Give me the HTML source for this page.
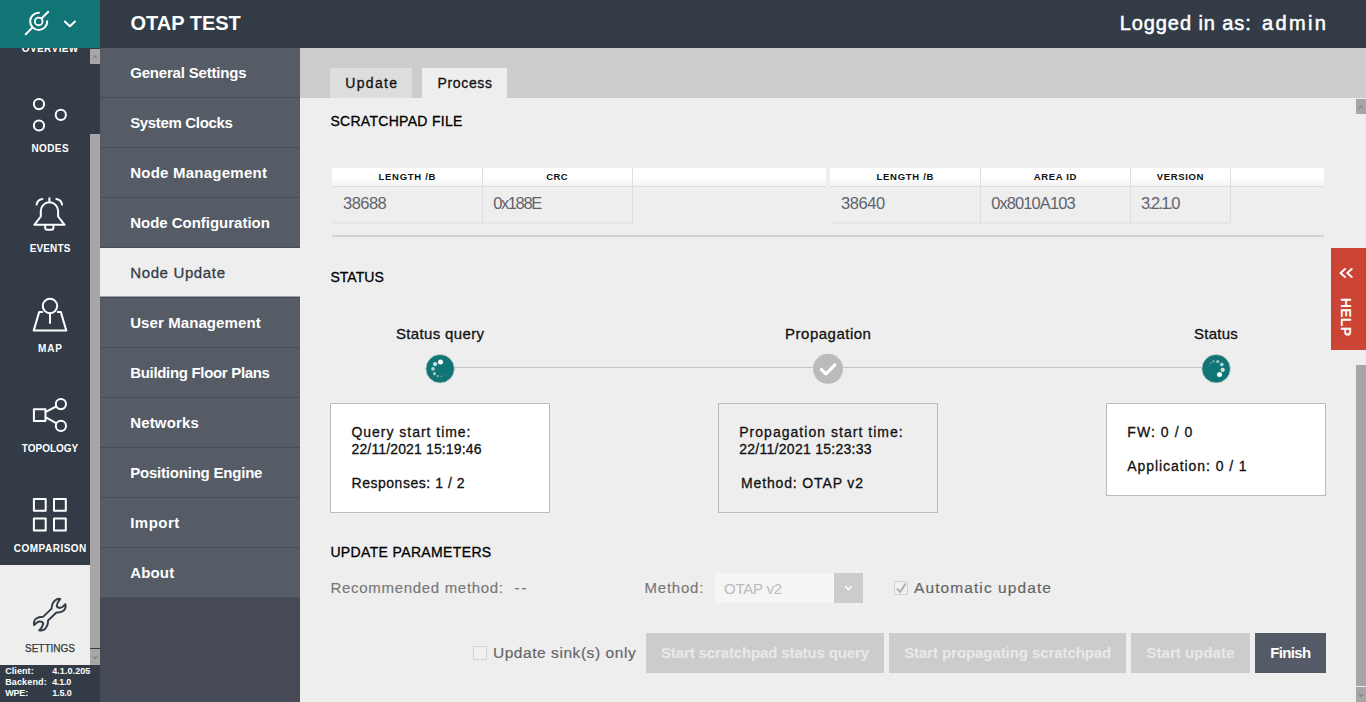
<!DOCTYPE html>
<html lang="en">
<head>
<meta charset="utf-8">
<title>OTAP TEST</title>
<style>
html,body{margin:0;padding:0}
body{width:1366px;height:702px;overflow:hidden;background:#eee;font-family:"Liberation Sans",sans-serif;position:relative}
.t{position:absolute;white-space:pre;line-height:normal}
.b{position:absolute}
svg{position:absolute;overflow:visible}
.ic{fill:none;stroke:#fff;stroke-width:2;stroke-linecap:round;stroke-linejoin:round}
.sb{background:#a6a6a6}
.mi{left:100px;width:200px;height:49px;background:#555c66;border-bottom:1px solid #464d58}
.btn{top:633px;height:40px;background:#ccc}
.th{top:168px;height:18px;background:linear-gradient(#fff 0,#fff 45%,#f3f3f3 100%);border-bottom:1px solid #ddd}
.vl{width:1px;background:#ddd;top:168px;height:55px}
.hl{height:2px;background:#e6e6e6;top:222px}
.box{top:403px;width:218px;border:1px solid #bbb}
.cb{width:12px;height:12px;border:1px solid #d2d2d2;background:#f1f1f1}
</style>
</head>
<body>
<nav>
<div class="b" style="left:0;top:48px;width:100px;height:654px;background:#333c46"></div>
<div class="b" style="left:0;top:565px;width:90px;height:100px;background:#eee"></div>
<span class="t" style="left:21.8px;top:42.8px;font-size:10px;font-weight:700;color:#fff;letter-spacing:0.40px;">OVERVIEW</span>
<span class="t" style="left:31.4px;top:142.8px;font-size:10px;font-weight:700;color:#fff;letter-spacing:0.41px;">NODES</span>
<span class="t" style="left:29.8px;top:242.8px;font-size:10px;font-weight:700;color:#fff;letter-spacing:0.10px;">EVENTS</span>
<span class="t" style="left:38.0px;top:342.8px;font-size:10px;font-weight:700;color:#fff;letter-spacing:0.83px;">MAP</span>
<span class="t" style="left:21.8px;top:442.8px;font-size:10px;font-weight:700;color:#fff;letter-spacing:-0.01px;">TOPOLOGY</span>
<span class="t" style="left:13.8px;top:542.8px;font-size:10px;font-weight:700;color:#fff;letter-spacing:0.48px;">COMPARISON</span>
<span class="t" style="left:25.0px;top:642.8px;font-size:10px;color:#333c46;-webkit-text-stroke:.25px #333c46;">SETTINGS</span>
<svg width="100" height="617" viewBox="0 48 100 617" style="left:0;top:48px">
<g class="ic">
<circle cx="39" cy="104.1" r="5.1"/><circle cx="60.8" cy="114.9" r="5.1"/><circle cx="39" cy="125.5" r="5.1"/>
<path d="M49.4 198.3V202.3M40.8 216.5V211A8.65 8.65 0 0 1 58.1 211V216.5L64.6 224.8H34.3L40.8 216.5ZM45.2 225V227.7Q45.2 229.7 47.2 229.7H51.4Q53.4 229.7 53.4 227.7V225M36.6 204.6A6.8 6.8 0 0 1 42.4 198.9M56.3 198.9A6.8 6.8 0 0 1 62.1 204.6"/>
<circle cx="50" cy="306" r="7.2"/><path d="M50 313.4V323M42.2 311.9H39.2L33.7 330.6H66.3L60.8 311.9H57.8"/>
<rect x="33.9" y="409.3" width="11.6" height="11.6"/><circle cx="60.9" cy="404.1" r="5.1"/><circle cx="60.9" cy="425.9" r="5.1"/><path d="M45.8 411.8L56.2 406.5M45.8 417.3L56.2 423.2"/>
<rect x="33.9" y="499" width="11.8" height="11.8"/><rect x="54" y="499" width="11.8" height="11.8"/><rect x="33.9" y="518.6" width="11.8" height="11.8"/><rect x="54" y="518.6" width="11.8" height="11.8"/>
</g>
<g transform="translate(25 592) scale(0.0641)"><path fill="none" stroke="#333b46" stroke-width="30" stroke-linejoin="round" stroke-linecap="round" d="M285 385L415 260C415 190 440 140 500 110C520 104 538 104 550 108C526 138 500 175 495 215C500 240 530 250 560 245C590 235 612 214 630 190C640 224 635 260 600 293C570 315 530 322 490 320L360 445C360 500 345 550 300 588C270 603 242 604 220 598C248 572 275 540 285 495C280 465 250 458 220 460C185 470 163 496 143 518C132 482 140 445 175 412C205 390 245 385 285 385Z"/></g>
</svg>
<div class="b sb" style="left:90px;top:49px;width:10px;height:15px"></div>
<div class="b sb" style="left:90px;top:134px;width:10px;height:514px"></div>
<div class="b sb" style="left:90px;top:649px;width:10px;height:16px"></div>
<svg width="10" height="617" viewBox="90 48 10 617" style="left:90px;top:48px"><path fill="none" stroke="#808080" stroke-width="1.1" d="M92.8 58.5L94.9 55.7L97 58.5M92.9 656L94.9 658.5L96.9 656"/></svg>
<span class="t" style="left:5.2px;top:665.9px;font-size:9px;font-weight:700;color:#fff;letter-spacing:0.08px;">Client:</span>
<span class="t" style="left:52.2px;top:665.9px;font-size:9px;font-weight:700;color:#fff;letter-spacing:0.08px;">4.1.0.205</span>
<span class="t" style="left:5.2px;top:676.8px;font-size:9px;font-weight:700;color:#fff;letter-spacing:0.14px;">Backend:</span>
<span class="t" style="left:52.2px;top:676.8px;font-size:9px;font-weight:700;color:#fff;letter-spacing:-0.26px;">4.1.0</span>
<span class="t" style="left:5.2px;top:687.7px;font-size:9px;font-weight:700;color:#fff;letter-spacing:-0.17px;">WPE:</span>
<span class="t" style="left:52.2px;top:687.7px;font-size:9px;font-weight:700;color:#fff;letter-spacing:-0.13px;">1.5.0</span>
</nav>
<nav>
<div class="b" style="left:100px;top:48px;width:200px;height:654px;background:#454a56"></div>
<div class="b mi" style="top:48px"></div><span class="t" style="left:130.2px;top:64.0px;font-size:15px;font-weight:700;color:#fff;letter-spacing:-0.19px;">General Settings</span>
<div class="b mi" style="top:98px"></div><span class="t" style="left:130.2px;top:114.0px;font-size:15px;font-weight:700;color:#fff;letter-spacing:-0.34px;">System Clocks</span>
<div class="b mi" style="top:148px"></div><span class="t" style="left:130.2px;top:164.0px;font-size:15px;font-weight:700;color:#fff;letter-spacing:0.24px;">Node Management</span>
<div class="b mi" style="top:198px"></div><span class="t" style="left:130.2px;top:214.0px;font-size:15px;font-weight:700;color:#fff;letter-spacing:-0.02px;">Node Configuration</span>
<div class="b" style="left:100px;top:248px;width:200px;height:48px;background:#eee;border-bottom:1px solid #9da0a6"></div><span class="t" style="left:130.2px;top:264.0px;font-size:15px;color:#333c46;letter-spacing:0.64px;-webkit-text-stroke:.3px #333c46;">Node Update</span>
<div class="b mi" style="top:298px"></div><span class="t" style="left:130.2px;top:314.0px;font-size:15px;font-weight:700;color:#fff;letter-spacing:0.09px;">User Management</span>
<div class="b mi" style="top:348px"></div><span class="t" style="left:130.2px;top:364.0px;font-size:15px;font-weight:700;color:#fff;letter-spacing:-0.32px;">Building Floor Plans</span>
<div class="b mi" style="top:398px"></div><span class="t" style="left:130.2px;top:414.0px;font-size:15px;font-weight:700;color:#fff;letter-spacing:0.17px;">Networks</span>
<div class="b mi" style="top:448px"></div><span class="t" style="left:130.2px;top:464.0px;font-size:15px;font-weight:700;color:#fff;letter-spacing:-0.21px;">Positioning Engine</span>
<div class="b mi" style="top:498px"></div><span class="t" style="left:130.2px;top:514.0px;font-size:15px;font-weight:700;color:#fff;letter-spacing:0.47px;">Import</span>
<div class="b mi" style="top:548px"></div><span class="t" style="left:130.2px;top:564.0px;font-size:15px;font-weight:700;color:#fff;letter-spacing:0.17px;">About</span>
</nav>
<main>
<div class="b" style="left:300px;top:48px;width:1066px;height:50px;background:#ccc"></div>
<div class="b" style="left:330px;top:68px;width:82px;height:30px;background:#ddd"></div><span class="t" style="left:345.3px;top:74.6px;font-size:14px;color:#111;letter-spacing:1.31px;-webkit-text-stroke:.3px #111;">Update</span>
<div class="b" style="left:422px;top:68px;width:85px;height:30px;background:#eee"></div><span class="t" style="left:437.6px;top:74.6px;font-size:14px;color:#111;letter-spacing:0.64px;-webkit-text-stroke:.3px #111;">Process</span>
<section>
<span class="t" style="left:330.4px;top:113.0px;font-size:14px;color:#000;letter-spacing:0.30px;-webkit-text-stroke:.3px #000;">SCRATCHPAD FILE</span>
<div class="b th" style="left:332px;width:494px"></div><div class="b th" style="left:830px;width:494px"></div>
<div class="b vl" style="left:482px"></div><div class="b vl" style="left:632px"></div><div class="b vl" style="left:980px"></div><div class="b vl" style="left:1130px"></div><div class="b vl" style="left:1230px"></div>
<div class="b hl" style="left:333px;width:300px"></div><div class="b hl" style="left:831px;width:400px"></div>
<span class="t" style="left:378.5px;top:170.9px;font-size:9.5px;font-weight:700;color:#111;letter-spacing:0.72px;">LENGTH /B</span><span class="t" style="left:546.2px;top:170.9px;font-size:9.5px;font-weight:700;color:#111;letter-spacing:0.45px;">CRC</span><span class="t" style="left:876.5px;top:170.9px;font-size:9.5px;font-weight:700;color:#111;letter-spacing:0.72px;">LENGTH /B</span><span class="t" style="left:1033.8px;top:170.9px;font-size:9.5px;font-weight:700;color:#111;letter-spacing:0.63px;">AREA ID</span><span class="t" style="left:1156.8px;top:170.9px;font-size:9.5px;font-weight:700;color:#111;letter-spacing:0.62px;">VERSION</span>
<span class="t" style="left:343.0px;top:194.0px;font-size:16.5px;color:#5e646d;letter-spacing:-0.55px;">38688</span><span class="t" style="left:493.2px;top:194.0px;font-size:16.5px;color:#5e646d;letter-spacing:-1.39px;">0x188E</span><span class="t" style="left:841.0px;top:194.0px;font-size:16.5px;color:#5e646d;letter-spacing:-0.40px;">38640</span><span class="t" style="left:991.2px;top:194.0px;font-size:16.5px;color:#5e646d;letter-spacing:-0.91px;">0x8010A103</span><span class="t" style="left:1141.0px;top:194.0px;font-size:16.5px;color:#5e646d;letter-spacing:-1.83px;">3.2.1.0</span>
<div class="b" style="left:332px;top:235px;width:992px;height:2px;background:#d2d2d2"></div>
</section>
<section>
<span class="t" style="left:330.4px;top:269.0px;font-size:14px;color:#000;letter-spacing:0.05px;-webkit-text-stroke:.3px #000;">STATUS</span>
<div class="b" style="left:440px;top:367px;width:776px;height:1px;background:#c4c4c4"></div>
<span class="t" style="left:395.9px;top:325.4px;font-size:15px;color:#111;letter-spacing:0.36px;-webkit-text-stroke:.3px #111;">Status query</span><span class="t" style="left:785.1px;top:325.4px;font-size:15px;color:#111;letter-spacing:0.49px;-webkit-text-stroke:.3px #111;">Propagation</span><span class="t" style="left:1194.0px;top:325.4px;font-size:15px;color:#111;letter-spacing:0.27px;-webkit-text-stroke:.3px #111;">Status</span>
<svg width="800" height="32" viewBox="424 353 800 32" style="left:424px;top:353px">
<circle cx="440.1" cy="368.75" r="14.3" fill="#127575" stroke="#cfd8d8" stroke-width=".8"/>
<g fill="#fff"><circle cx="440.5" cy="362.1" r="2.5"/><circle cx="435.1" cy="364.1" r="2.1" opacity=".8"/><circle cx="433" cy="368.9" r="1.8" opacity=".7"/><circle cx="434.5" cy="373.7" r="1.6" opacity=".6"/><circle cx="437.8" cy="376.1" r="1.2" opacity=".45"/><circle cx="441.4" cy="376.5" r=".9" opacity=".3"/><circle cx="444.3" cy="375.2" r=".6" opacity=".2"/></g>
<circle cx="828" cy="368.85" r="15" fill="#bbb"/>
<path d="M821.3 369.3L825.9 373.9L834.9 364.8" fill="none" stroke="#fff" stroke-width="3.1" stroke-linecap="round" stroke-linejoin="round"/>
<circle cx="1216.1" cy="368.75" r="14.3" fill="#127575" stroke="#cfd8d8" stroke-width=".8"/>
<g fill="#fff"><circle cx="1219.5" cy="374.5" r="2.5"/><circle cx="1222.7" cy="369.9" r="2.1" opacity=".8"/><circle cx="1221.8" cy="364.6" r="1.8" opacity=".7"/><circle cx="1217.8" cy="361.5" r="1.6" opacity=".6"/><circle cx="1213.5" cy="361.4" r="1.2" opacity=".45"/><circle cx="1210.5" cy="363" r=".9" opacity=".3"/><circle cx="1209" cy="365.6" r=".6" opacity=".2"/></g>
</svg>
<div class="b box" style="left:330px;height:108px;background:#fff"></div><div class="b box" style="left:718px;height:108px"></div><div class="b box" style="left:1106px;height:91px;background:#fff"></div>
<span class="t" style="left:351.5px;top:424.3px;font-size:14px;color:#111;letter-spacing:0.97px;-webkit-text-stroke:.3px #111;">Query start time:</span><span class="t" style="left:351.5px;top:441.0px;font-size:14px;color:#111;letter-spacing:0.14px;-webkit-text-stroke:.3px #111;">22/11/2021 15:19:46</span><span class="t" style="left:351.5px;top:474.8px;font-size:14px;color:#111;letter-spacing:0.53px;-webkit-text-stroke:.3px #111;">Responses: 1 / 2</span><span class="t" style="left:739.2px;top:424.3px;font-size:14px;color:#111;letter-spacing:1.03px;-webkit-text-stroke:.3px #111;">Propagation start time:</span><span class="t" style="left:739.2px;top:441.0px;font-size:14px;color:#111;letter-spacing:0.28px;-webkit-text-stroke:.3px #111;">22/11/2021 15:23:33</span><span class="t" style="left:741.0px;top:474.8px;font-size:14px;color:#111;letter-spacing:0.86px;-webkit-text-stroke:.3px #111;">Method: OTAP v2</span><span class="t" style="left:1127.3px;top:424.0px;font-size:14px;color:#111;letter-spacing:1.07px;-webkit-text-stroke:.3px #111;">FW: 0 / 0</span><span class="t" style="left:1127.3px;top:457.8px;font-size:14px;color:#111;letter-spacing:0.93px;-webkit-text-stroke:.3px #111;">Application: 0 / 1</span>
</section>
<section>
<span class="t" style="left:330.4px;top:544.0px;font-size:14px;color:#000;letter-spacing:0.36px;-webkit-text-stroke:.3px #000;">UPDATE PARAMETERS</span>
<div class="b" style="left:714px;top:573px;width:120px;height:30px;background:#f5f5f5"></div><div class="b" style="left:834px;top:573px;width:29px;height:30px;background:#ccc"></div><svg width="10" height="6" viewBox="0 0 10 6" style="left:843px;top:585px"><path d="M2.7 1.6L5.4 4.5L8.1 1.6" fill="none" stroke="#fff" stroke-width="1.6" stroke-linecap="round" stroke-linejoin="round"/></svg>
<div class="b cb" style="left:894px;top:581px"></div><svg width="14" height="14" viewBox="0 0 14 14" style="left:894px;top:581px"><path d="M2.9 7.6L6.3 11L11.5 2.5" fill="none" stroke="#adadad" stroke-width="1.9"/></svg><div class="b cb" style="left:473px;top:646px"></div>
<span class="t" style="left:330.5px;top:579.2px;font-size:15px;color:#777;letter-spacing:0.69px;-webkit-text-stroke:.15px #777;">Recommended method:</span><span class="t" style="left:514.4px;top:579.2px;font-size:15px;color:#777;letter-spacing:2.10px;-webkit-text-stroke:.15px #777;">--</span><span class="t" style="left:644.5px;top:579.2px;font-size:15px;color:#777;letter-spacing:0.78px;-webkit-text-stroke:.15px #777;">Method:</span><span class="t" style="left:724.0px;top:579.8px;font-size:15px;color:#bbb;letter-spacing:-0.24px;">OTAP v2</span><span class="t" style="left:914.0px;top:579.0px;font-size:15.5px;color:#666;letter-spacing:1.09px;-webkit-text-stroke:.2px #666;">Automatic update</span><span class="t" style="left:492.9px;top:644.0px;font-size:15.5px;color:#666;letter-spacing:0.56px;-webkit-text-stroke:.2px #666;">Update sink(s) only</span>
<div class="b btn" style="left:646px;width:238px;background:#ccc"></div><span class="t" style="left:661.0px;top:644.0px;font-size:15px;font-weight:700;color:#e9e9e9;letter-spacing:-0.13px;">Start scratchpad status query</span>
<div class="b btn" style="left:889px;width:237px;background:#ccc"></div><span class="t" style="left:904.2px;top:644.0px;font-size:15px;font-weight:700;color:#e9e9e9;letter-spacing:-0.08px;">Start propagating scratchpad</span>
<div class="b btn" style="left:1131px;width:119px;background:#ccc"></div><span class="t" style="left:1146.5px;top:644.0px;font-size:15px;font-weight:700;color:#e9e9e9;letter-spacing:0.03px;">Start update</span>
<div class="b btn" style="left:1255px;width:71px;background:#555b66"></div><span class="t" style="left:1270.3px;top:644.0px;font-size:15px;font-weight:700;color:#fff;letter-spacing:-0.65px;">Finish</span>
</section>
<div class="b sb" style="left:1356px;top:99px;width:10px;height:15px"></div><div class="b sb" style="left:1356px;top:365px;width:10px;height:321px"></div><div class="b sb" style="left:1356px;top:687px;width:10px;height:15px"></div>
<svg width="10" height="604" viewBox="1356 98 10 604" style="left:1356px;top:98px"><path fill="none" stroke="#808080" stroke-width="1.1" d="M1359.1 108.7L1361 105.7L1362.9 108.7M1359.2 693.8L1361.2 696.4L1363.2 693.8"/></svg>
<aside><div class="b" style="left:1331px;top:248px;width:35px;height:102px;background:#cc4433"></div><svg width="16" height="12" viewBox="0 0 16 12" style="left:1338px;top:266.5px"><path d="M7 2L2.5 6L7 10M13.7 2L9.2 6L13.7 10" fill="none" stroke="#fff" stroke-width="2" stroke-linecap="round" stroke-linejoin="round"/></svg><span class="t" style="left:1346px;top:317px;font-size:14px;font-weight:700;color:#fff;letter-spacing:.3px;line-height:14px;transform:translate(-50%,-50%) rotate(90deg)">HELP</span></aside>
</main>
<header>
<div class="b" style="left:0;top:0;width:1366px;height:48px;background:#333c46"></div><div class="b" style="left:0;top:0;width:100px;height:48px;background:#127575"></div>
<svg width="100" height="48" viewBox="0 0 100 48" style="left:0;top:0">
<g fill="none" stroke="#fff" stroke-linecap="round" stroke-linejoin="round">
<path d="M25.7 34.2L32.2 27.7M39 21L48.2 11.8" stroke-width="2"/>
<circle cx="38.7" cy="21.4" r="3.85" fill="#127575" stroke-width="1.8"/>
<path d="M38.9 12.85A8.55 8.55 0 1 0 47.25 21.3" stroke-width="2"/>
<path d="M64.8 21.5L69.9 26.3L75 21.5" stroke-width="2"/>
</g></svg>
<span class="t" style="left:130.5px;top:12.1px;font-size:20px;font-weight:700;color:#fff;letter-spacing:-0.01px;">OTAP TEST</span><span class="t" style="left:1119.7px;top:11.9px;font-size:20px;color:#fff;letter-spacing:0.92px;-webkit-text-stroke:.5px #fff;">Logged in as:</span><span class="t" style="left:1262.0px;top:11.9px;font-size:20px;color:#fff;letter-spacing:2.38px;-webkit-text-stroke:.5px #fff;">admin</span>
</header>
</body>
</html>
